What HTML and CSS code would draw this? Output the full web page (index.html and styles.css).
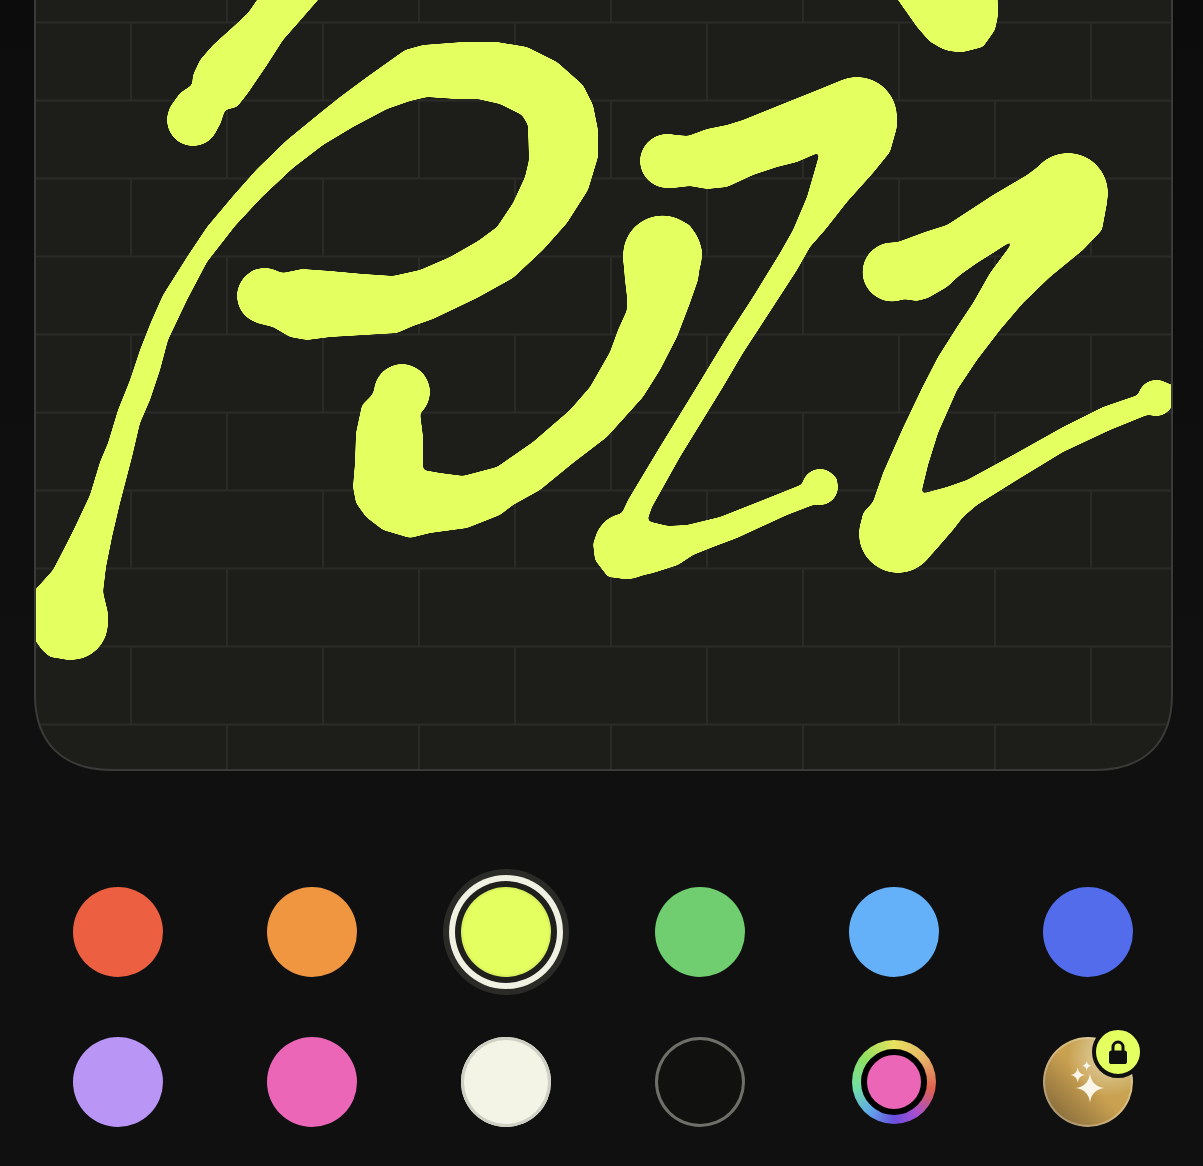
FILE: index.html
```html
<!DOCTYPE html>
<html lang="en">
<head>
<meta charset="utf-8">
<title>Draw</title>
<link rel="stylesheet" href="styles.css">
</head>
<body>
<main class="app">
  <section class="canvas" aria-label="Drawing canvas">
    <svg class="drawing" viewBox="34 0 1140 771" xmlns="http://www.w3.org/2000/svg">
      <defs>
        <pattern id="bricks" patternUnits="userSpaceOnUse" x="130" y="21.5" width="192" height="156">
          <rect class="mortar" x="0" y="0" width="192" height="2"/>
          <rect class="mortar" x="0" y="78" width="192" height="2"/>
          <rect class="mortar" x="0" y="0" width="2" height="78"/>
          <rect class="mortar" x="96" y="78" width="2" height="78"/>
        </pattern>
        <clipPath id="sheet">
          <path d="M35,-5 V695 C35,742 62,770 112,770 H1095 C1145,770 1172,742 1172,695 V-5Z"/>
        </clipPath>
        <filter id="smooth" filterUnits="userSpaceOnUse" x="0" y="-60" width="1220" height="800" color-interpolation-filters="sRGB">
          <feGaussianBlur in="SourceGraphic" stdDeviation="2"/>
          <feComponentTransfer>
            <feFuncA type="linear" slope="12" intercept="-5.4"/>
          </feComponentTransfer>
        </filter>
      </defs>
      <path class="sheet" d="M35,-5 V695 C35,742 62,770 112,770 H1095 C1145,770 1172,742 1172,695 V-5Z"/>
      <g clip-path="url(#sheet)">
        <rect x="35" y="0" width="1137" height="770" fill="url(#bricks)"/>
        <g class="ink" filter="url(#smooth)">
          <path d="M272,-20 257,0 248,13 233,27 213,45 200,60 193,75 192,85 180,93 170,107 167,120 173,135 193,146 210,138 220,125 225,110 237,107 248,93 267,65 283,40 298,23 318,0 335,-20Z"/>
          <path d="M22,605 35,590 53,570 67,543 75,527 90,495 100,462 108,443 118,410 130,380 140,350 151,322 163,295 187,257 207,227 233,196 257,169 287,140 320,113 340,97 367,77 405,50 423,45 463,42 497,42 527,47 557,62 583,85 593,105 598,130 598,157 588,190 567,223 543,250 513,278 477,298 433,319 413,326 397,333 330,337 307,340 290,337 273,327 257,323 243,312 237,295 242,280 253,270 265,268 283,273 302,269 330,271 363,274 393,276 420,270 450,257 478,241 497,227 513,203 525,177 529,160 528,125 522,115 500,104 478,99 457,99 427,97 410,101 387,109 353,127 323,145 293,168 262,197 235,226 207,262 187,300 168,340 160,370 150,400 140,423 132,457 120,503 112,537 106,567 103,592 108,613 105,637 90,653 70,660 50,657 42,650 35,640 22,630Z"/>
          <path d="M403,364 423,373 429,392 420,413 423,437 423,470 440,473 463,476 497,467 533,442 570,410 590,387 598,373 610,352 618,330 627,310 627,297 625,280 623,257 628,238 647,222 668,216 690,225 702,250 698,280 690,303 677,337 660,370 643,397 607,437 573,463 540,490 513,505 500,515 467,528 430,533 410,538 383,530 366,517 356,503 353,487 355,463 356,433 362,405 372,395 380,377Z"/>
          <path d="M640,160 647,143 665,134 688,136 707,129 727,125 743,120 780,105 820,89 837,82 857,77 880,85 895,110 897,127 890,152 873,173 847,202 825,230 810,247 797,270 760,327 743,353 723,387 680,457 652,507 647,521 668,526 687,525 720,517 763,500 803,484 812,473 823,469 837,478 837,492 827,503 813,505 787,515 737,538 713,547 693,555 678,565 653,573 627,579 608,577 595,560 593,543 602,527 622,513 628,500 658,450 693,393 727,337 753,297 780,253 793,230 807,197 820,152 797,162 777,167 753,175 727,187 707,189 690,186 673,188 653,182 643,172Z"/>
          <path d="M863,272 870,252 883,244 898,242 925,232 947,225 967,212 993,195 1027,175 1047,160 1068,153 1090,160 1105,180 1107,203 1102,230 1083,250 1050,277 1023,303 1000,330 977,360 957,390 938,433 928,465 921,494 947,487 967,480 1013,455 1063,427 1103,407 1138,395 1148,383 1160,380 1172,385 1190,390 1190,405 1172,402 1163,413 1147,415 1110,430 1063,452 1017,480 977,505 963,517 953,530 933,553 917,567 898,572 880,567 865,552 859,533 863,513 873,502 883,473 902,430 922,388 938,357 957,327 973,303 990,273 1016,238 993,253 977,263 960,275 947,287 928,298 917,301 903,299 892,301 877,295 867,285Z"/>
          <path d="M884,-20 898,0 917,27 930,42 950,50 963,52 983,47 995,30 998,13 997,-20Z"/>
          <circle cx="193" cy="120" r="26"/>
          <circle cx="71" cy="623" r="37"/>
          <circle cx="265" cy="296" r="28"/>
          <circle cx="402" cy="392" r="28"/>
          <circle cx="662.5" cy="255" r="39.5"/>
          <circle cx="667" cy="161" r="27"/>
          <circle cx="857" cy="117" r="40"/>
          <circle cx="820" cy="487" r="18"/>
          <circle cx="627" cy="546" r="33"/>
          <circle cx="892" cy="272" r="29.5"/>
          <circle cx="1068" cy="193" r="40"/>
          <circle cx="1156" cy="398" r="18"/>
          <circle cx="898" cy="534" r="39"/>
          <circle cx="958" cy="12" r="40"/>
        </g>
      </g>
      <path class="sheet-edge" d="M35,-5 V695 C35,742 62,770 112,770 H1095 C1145,770 1172,742 1172,695 V-5"/>
    </svg>
  </section>

  <section class="palette" aria-label="Colours">
    <button class="swatch red" aria-label="Red"></button>
    <button class="swatch orange" aria-label="Orange"></button>
    <button class="swatch yellow selected" aria-label="Yellow"></button>
    <button class="swatch green" aria-label="Green"></button>
    <button class="swatch blue" aria-label="Blue"></button>
    <button class="swatch indigo" aria-label="Indigo"></button>
    <button class="swatch purple" aria-label="Purple"></button>
    <button class="swatch pink" aria-label="Pink"></button>
    <button class="swatch white" aria-label="White"></button>
    <button class="swatch black" aria-label="Black"></button>
    <button class="swatch custom" aria-label="Custom colour"><span class="custom-ring"><span class="custom-dot"></span></span></button>
    <button class="swatch gold" aria-label="Gold, locked">
      <svg class="sparkles" viewBox="0 0 90 90" xmlns="http://www.w3.org/2000/svg">
        <path d="M47,36.5 Q48.6,49.4 61.5,51 Q48.6,52.6 47,65.5 Q45.4,52.6 32.5,51 Q45.4,49.4 47,36.5Z"/>
        <path d="M34.7,30.8 Q35.6,37.1 41.9,38 Q35.6,38.9 34.7,45.2 Q33.8,38.9 27.5,38 Q33.8,37.1 34.7,30.8Z"/>
        <path d="M43.7,24 Q44.3,28.1 48.4,28.7 Q44.3,29.3 43.7,33.4 Q43.1,29.3 39,28.7 Q43.1,28.1 43.7,24Z"/>
      </svg>
      <span class="lock-badge">
        <svg class="lock" viewBox="0 0 18 24" xmlns="http://www.w3.org/2000/svg">
          <path class="shackle" d="M4,12 V7 a5,5 0 0 1 10,0 V12"/>
          <rect class="lock-body" x="0" y="10.5" width="18" height="13.5" rx="2.6"/>
        </svg>
      </span>
    </button>
  </section>
</main>
</body>
</html>
```

FILE: styles.css
```css
* {
  box-sizing: border-box;
}

html,
body {
  margin: 0;
  padding: 0;
  background: #101010;
  font-family: "Inter", "Liberation Sans", sans-serif;
}

.app {
  height: 1166px;
  overflow: hidden;
  padding-left: 34px;
  background: linear-gradient(180deg, #0c0c0c 0, #101010 760px);
}

.canvas {
  width: 1140px;
  height: 771px;
}

.drawing {
  display: block;
  width: 1140px;
  height: 771px;
}

.sheet {
  fill: #1d1e1a;
}

.sheet-edge {
  fill: none;
  stroke: #3a3a38;
  stroke-width: 2;
}

.mortar {
  fill: #2a2b27;
}

.ink {
  fill: #e4ff60;
}

.palette {
  display: grid;
  grid-template-columns: repeat(6, 90px);
  grid-auto-rows: 90px;
  column-gap: 104px;
  row-gap: 60px;
  margin-top: 116px;
  margin-left: 39px;
}

.swatch {
  position: relative;
  display: flex;
  align-items: center;
  justify-content: center;
  width: 90px;
  height: 90px;
  padding: 0;
  border: 0;
  border-radius: 50%;
  background: transparent;
}

.red { background: #ec5f40; }
.orange { background: #f09540; }
.yellow { background: #e4ff60; }
.green { background: #70ce70; }
.blue { background: #65b1f9; }
.indigo { background: #536ceb; }
.purple { background: #b995f6; }
.pink { background: #ec66b8; }

.selected {
  box-shadow:
    inset 0 0 0 2px rgba(0, 0, 0, 0.05),
    0 0 0 6px #1f201c,
    0 0 0 12px #f0f1e2,
    0 0 0 18px #2a2b26;
}

.white {
  background: #f3f4e6;
  box-shadow: inset 0 0 0 3px #cfd0c4;
}

.black {
  background: #111110;
  box-shadow: inset 0 0 0 3px #6f6f69;
}

.custom-ring {
  display: flex;
  align-items: center;
  justify-content: center;
  width: 84px;
  height: 84px;
  border-radius: 50%;
  background: conic-gradient(
    #e8e25f 0deg,
    #e6b668 50deg,
    #e0604f 100deg,
    #a64fd0 145deg,
    #6a4fe0 180deg,
    #60a8e8 220deg,
    #72e0a4 262deg,
    #90e060 310deg,
    #e8e25f 360deg
  );
}

.custom-dot {
  width: 66px;
  height: 66px;
  border: 6px solid #000;
  border-radius: 50%;
  background: #ec66b8;
}

.gold {
  background:
    radial-gradient(circle at 72% 22%, rgba(232, 222, 190, 0.85) 0%, rgba(232, 222, 190, 0) 42%),
    linear-gradient(45deg, #82673a 8%, #c9a050 50%, #c8a552 70%, #c8b27c 100%);
  box-shadow: inset 0 0 0 2px rgba(255, 255, 255, 0.28);
}

.sparkles {
  width: 90px;
  height: 90px;
  fill: #fbf6ea;
}

.lock-badge {
  position: absolute;
  top: -11px;
  left: 49px;
  display: flex;
  align-items: center;
  justify-content: center;
  width: 52px;
  height: 52px;
  border: 4px solid #101010;
  border-radius: 50%;
  background: #e4ff60;
}

.lock {
  width: 18px;
  height: 24px;
}

.shackle {
  fill: none;
  stroke: #101010;
  stroke-width: 3;
}

.lock-body {
  fill: #101010;
}
```
